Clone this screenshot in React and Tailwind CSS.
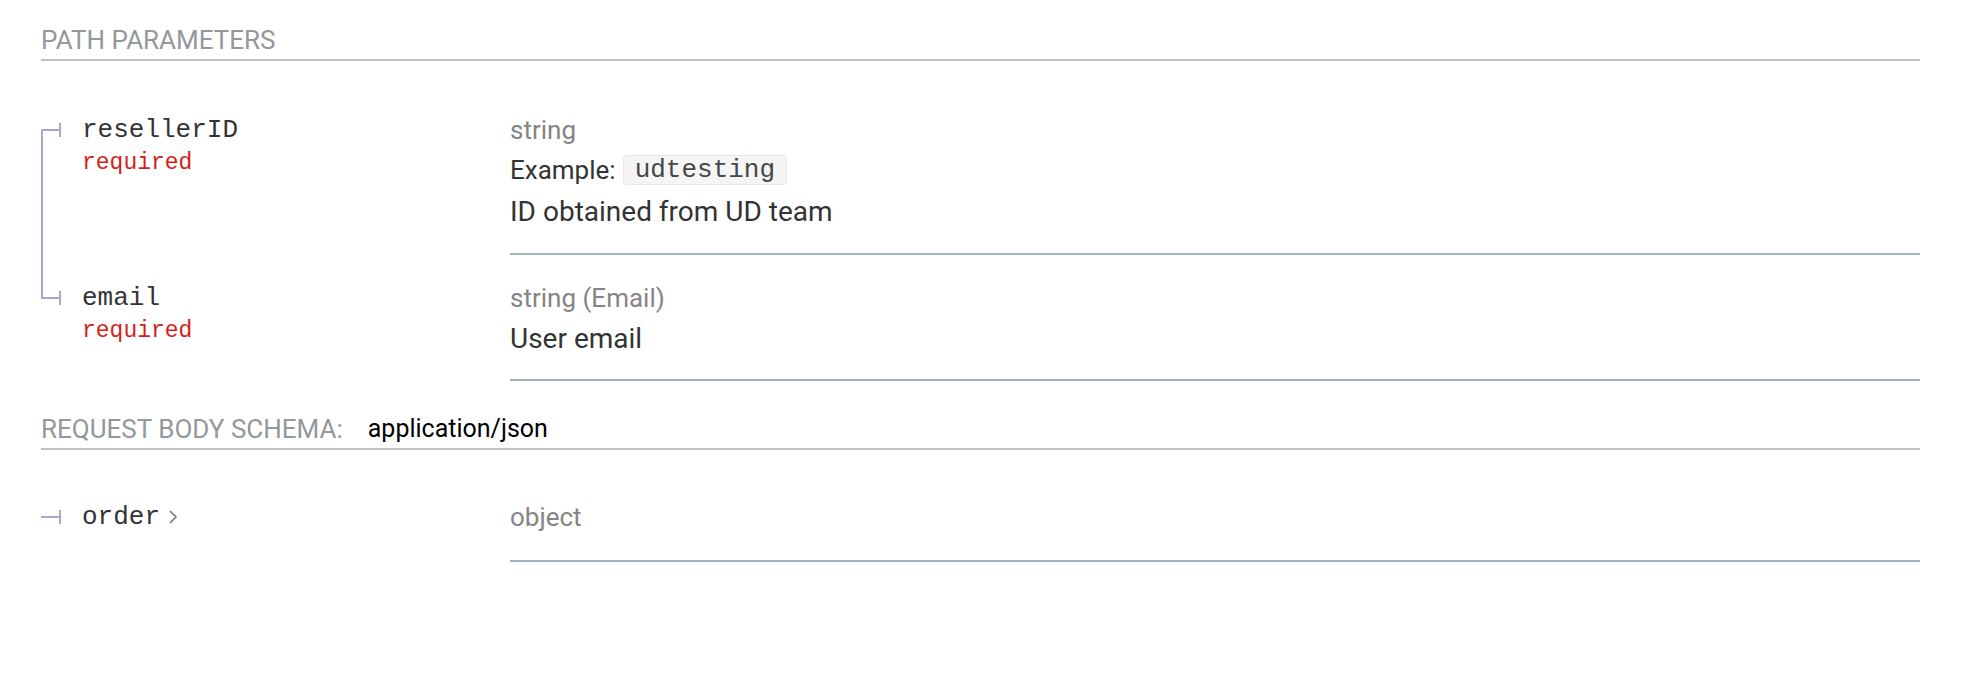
import { useState } from "react";

const pathParams = [
  {
    name: "resellerID",
    required: true,
    type: "string",
    example: "udtesting",
    description: "ID obtained from UD team",
  },
  {
    name: "email",
    required: true,
    type: "string (Email)",
    description: "User email",
  },
];

function TreeMark({ first, last }) {
  return (
    <svg width="20" height="14" viewBox="0 0 20 14" className="block">
      {!first && <line x1="1" y1="0" x2="1" y2="8" stroke="#a7a7cf" strokeWidth="2" />}
      {!last && <line x1="1" y1="6" x2="1" y2="14" stroke="#a7a7cf" strokeWidth="2" />}
      <line x1="0" y1="7" x2="19" y2="7" stroke="#a7a7cf" strokeWidth="2" />
      <line x1="19" y1="0" x2="19" y2="14" stroke="#a7a7cf" strokeWidth="2" />
    </svg>
  );
}

function Chevron() {
  return (
    <svg width="10" height="16" viewBox="0 0 10 16" className="ml-[8px] inline-block">
      <polyline points="2,2 8,8 2,14" fill="none" stroke="#777" strokeWidth="1.6" />
    </svg>
  );
}

function SectionTitle({ children, extra }) {
  return (
    <h5 className="flex h-[40px] items-center border-b-2 border-[#bec1c3] text-[26px] leading-[40px] font-normal">
      <span className="uppercase text-[#92989b]">{children}</span>
      {extra && <span className="ml-[25px] text-[25px] text-black">{extra}</span>}
    </h5>
  );
}

const mono = "font-['Courier_New','Nimbus_Mono_PS','FreeMono','Liberation_Mono',monospace]";

// bottom padding of the details cell differs a bit per row
const padBottom = {
  example: "pb-[20px]",
  plain: "pb-[19px]",
  object: "pb-[23px]",
};

function PropRow({ prop, first, last, expandable, variant = "plain" }) {
  return (
    <div className="flex">
      <div className="flex w-[469px] shrink-0">
        <div className="flex w-[20px] shrink-0 flex-col">
          <div className={first ? "h-[36px]" : "h-[36px] border-l-2 border-[#a7a7cf]"} />
          <TreeMark first={first} last={last} />
          <div className={last ? "flex-1" : "flex-1 border-l-2 border-[#a7a7cf]"} />
        </div>
        <div className="pl-[21px] pt-[23px]">
          <div className={`flex items-center ${mono} text-[26px] leading-[40px] text-[#333]`}>
            {prop.name}
            {expandable && <Chevron />}
          </div>
          {prop.required && (
            <div className={`${mono} text-[23px] leading-[26px] text-[#d41f1c]`}>required</div>
          )}
        </div>
      </div>
      <div className={`flex-1 border-b-2 border-[#9fb4be] pt-[23px] ${padBottom[variant]}`}>
        <div className="text-[26px] leading-[40px] text-[#858585]">{prop.type}</div>
        {prop.example && (
          <div className="flex h-[40px] items-center text-[26px] text-[#333]">
            <span>Example:</span>
            <span className={`ml-[7px] rounded-[4px] border border-[#e9e9e9] bg-[#f5f5f5] px-[11px] ${mono} text-[26px] leading-[28px] text-[#474747]`}>
              {prop.example}
            </span>
          </div>
        )}
        {prop.description && (
          <div className={prop.example ? "mt-[1px] text-[28px] leading-[42px] text-[#333]" : "text-[28px] leading-[42px] text-[#333]"}>
            {prop.description}
          </div>
        )}
      </div>
    </div>
  );
}

export default function App() {
  const [open] = useState(false);

  return (
    <div className="min-h-screen bg-white pl-[41px] pr-[50px] pt-[21px] font-['Roboto',sans-serif]">
      <SectionTitle>Path Parameters</SectionTitle>
      <div className="mt-[26px]">
        {pathParams.map((p, i) => (
          <PropRow
            key={p.name}
            prop={p}
            first={i === 0}
            last={i === pathParams.length - 1}
            variant={p.example ? "example" : "plain"}
          />
        ))}
      </div>

      <div className="mt-[29px]">
        <SectionTitle extra="application/json">Request Body Schema:</SectionTitle>
      </div>
      <div className="mt-[24px]">
        <PropRow prop={{ name: "order", type: "object" }} first last expandable={!open} variant="object" />
      </div>
    </div>
  );
}
